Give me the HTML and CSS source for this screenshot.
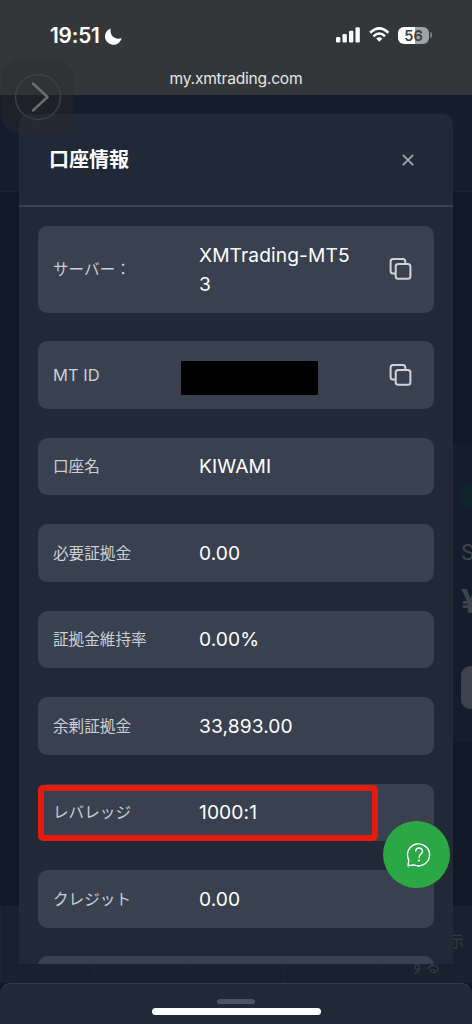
FILE: index.html
```html
<!DOCTYPE html>
<html lang="ja">
<head>
<meta charset="utf-8">
<meta name="viewport" content="width=device-width, initial-scale=1">
<title>口座情報</title>
<link rel="stylesheet" href="styles.css">
</head>
<body>
<div class="phone">
  <header class="browser-bar">
    <div class="status">
      <div class="clock">
        <span class="time">19:51</span>
        <svg class="moon" width="17" height="17" viewBox="0 0 17 17"><path d="M5.8.4C4.200 7 9.300 12.300 16.600 10.200A8.400 8.400 0 1 1 5.800.4Z" fill="#fff"/></svg>
      </div>
      <div class="indicators">
        <svg width="25" height="16" viewBox="0 0 25 16" fill="#fff"><rect x="0" y="10" width="4.300" height="5.500" rx="1.200"/><rect x="6.500" y="7" width="4.300" height="8.500" rx="1.200"/><rect x="13" y="3.800" width="4.300" height="11.700" rx="1.200"/><rect x="19.500" y=".3" width="4.300" height="15.200" rx="1.200"/></svg>
        <svg width="21" height="16" viewBox="0 0 21 16" fill="none" stroke="#fff" stroke-width="2.600"><path d="M1.200 5.700Q10.300-2.900 19.400 5.700M4.500 9.200Q10.300 3.800 16.100 9.200"/><path d="M7.200 11.600Q10.300 8.900 13.400 11.600L10.300 14.800Z" fill="#fff" stroke="none"/></svg>
        <div class="battery"><span class="cell">56</span><span class="cap"></span></div>
      </div>
    </div>
    <div class="address">my.xmtrading.com</div>
  </header>

  <main class="viewport">
    <div class="backdrop">
      <div class="site-head"></div>
      <div class="site-body">
        <div class="account-card">
          <span class="pill"></span>
          <span class="kind">S</span>
          <span class="amount">¥</span>
          <span class="button"></span>
        </div>
      </div>
      <div class="tabs"><span></span><span></span><span></span><span></span><span class="tab-text">もっと表示<br>する</span></div>
    </div>

    <section class="modal">
      <div class="modal-head">
        <h1>口座情報</h1>
        <svg width="12" height="12" viewBox="0 0 12 12" stroke="#a3adb8" stroke-width="1.700" stroke-linecap="round"><path d="M1.300 1.300l9.400 9.400M10.700 1.300l-9.400 9.400"/></svg>
      </div>
      <div class="rows">
        <div class="row row-server">
          <span class="label">サーバー：</span><span class="value server">XMTrading-MT53</span>
          <svg class="copy" width="24" height="24" viewBox="0 0 24 24"><path d="M17.300 6.500V4.600A2.500 2.500 0 0 0 14.800 2.100H5.100A2.500 2.500 0 0 0 2.600 4.600V14A2.500 2.500 0 0 0 5.100 16.500H7"/><rect x="7.700" y="7" width="14.700" height="14.700" rx="2.500"/></svg>
        </div>
        <div class="row row-id">
          <span class="label latin">MT ID</span><span class="value"><span class="masked"></span></span>
          <svg class="copy" width="24" height="24" viewBox="0 0 24 24"><path d="M17.300 6.500V4.600A2.500 2.500 0 0 0 14.800 2.100H5.100A2.500 2.500 0 0 0 2.600 4.600V14A2.500 2.500 0 0 0 5.100 16.500H7"/><rect x="7.700" y="7" width="14.700" height="14.700" rx="2.500"/></svg>
        </div>
        <div class="row"><span class="label">口座名</span><span class="value">KIWAMI</span></div>
        <div class="row"><span class="label">必要証拠金</span><span class="value">0.00</span></div>
        <div class="row"><span class="label">証拠金維持率</span><span class="value">0.00%</span></div>
        <div class="row"><span class="label">余剰証拠金</span><span class="value">33,893.00</span></div>
        <div class="row"><span class="label">レバレッジ</span><span class="value">1000:1</span><span class="highlight"></span></div>
        <div class="row"><span class="label">クレジット</span><span class="value">0.00</span></div>
        <div class="row"></div>
      </div>
    </section>
  </main>

  <footer class="sheet"><span class="grip"></span><span class="home"></span></footer>

  <div class="assist"><svg width="48" height="48" viewBox="0 0 48 48" fill="none" stroke-linecap="round" stroke-linejoin="round"><circle cx="24" cy="24" r="22.500" stroke="#3b4347" stroke-width="1.300"/><path d="M19 10.500L33.500 24 19 37.500" stroke="#696b6e" stroke-width="2.500"/></svg></div>
  <div class="chat"><svg width="26" height="26" viewBox="0 0 26 26" fill="none" stroke="#fff" stroke-width="1.400" stroke-linecap="round" stroke-linejoin="round"><path d="M2 23.800L2.800 18A11 11 0 1 1 8 22.900Z"/><path d="M9.700 9.300C9.700 5 16.500 5 16.500 9.200C16.500 12 13.100 12 13.100 15.500"/><circle cx="13.100" cy="18.600" r=".4"/></svg></div>
</div>
</body>
</html>
```
FILE: styles.css
```css
* { box-sizing: border-box; }
body { margin: 0; background: #111827; }
svg { display: block; }
.phone {
  position: relative;
  width: 472px;
  height: 1024px;
  overflow: hidden;
  display: flex;
  flex-direction: column;
  font-family: Inter, "Noto Sans CJK JP", sans-serif;
  color: #fff;
}
.browser-bar { height: 95px; flex: none; background: #343739; padding-top: 24px; }
.status { height: 24px; display: flex; justify-content: space-between; padding: 0 40px 0 50px; }
.clock { display: flex; align-items: center; gap: 5px; }
.time { font-size: 20.8px; font-weight: 600; letter-spacing: -.2px; line-height: 24px; }
.indicators { display: flex; align-items: center; padding-bottom: 2px; }
.indicators svg + svg { margin-left: 8px; }
.battery { display: flex; align-items: center; gap: 1px; margin-left: 8px; }
.cell {
  width: 31px;
  height: 17px;
  border-radius: 6px;
  background: linear-gradient(90deg, #fff 56%, #a0a2a3 56%);
  color: #3b3e40;
  font-size: 14.5px;
  font-weight: 600;
  line-height: 17px;
  text-align: center;
}
.cap { width: 2px; height: 6px; border-radius: 0 2px 2px 0; background: #77797b; }
.address { margin-top: 21px; text-align: center; font-size: 15.6px; letter-spacing: -.22px; line-height: 20px; color: #e5e6e6; }

.viewport { position: relative; height: 888px; flex: none; padding: 19px 19px 19px; }
.backdrop { position: absolute; inset: 0; display: flex; flex-direction: column; background: #111827; }
.site-head { height: 97px; background: #151c2b; border-bottom: 1px solid #1b2230; }
.site-body { height: 714px; padding-top: 252px; display: flex; justify-content: flex-end; }
.account-card {
  width: 19px;
  height: 298px;
  padding: 40px 0 0 8px;
  overflow: hidden;
  display: flex;
  flex-direction: column;
  background: #151c2c;
  color: #3e444d;
}
.pill { flex: none; width: 30px; height: 24px; border-radius: 9px; background: #0e242b; }
.kind { font-size: 21px; line-height: 24px; margin-top: 33px; }
.amount { font-size: 33px; font-weight: 700; line-height: 34px; margin-top: 19px; }
.button { flex: none; width: 40px; height: 43px; margin-top: 48px; border-radius: 9px; background: #3e444f; }
.tabs { height: 77px; display: grid; grid-template-columns: repeat(5, 94.4px); background: #19202e; }
.tabs span { border-left: 1px solid #1d2432; }
.tab-text { padding-top: 23px; text-align: center; white-space: nowrap; font-size: 15.6px; line-height: 25px; color: #333a45; }

.modal {
  position: relative;
  width: 434px;
  height: 850px;
  overflow: hidden;
  border-radius: 10px 10px 0 0;
  background: #212936;
}
.modal-head {
  height: 93px;
  padding: 0 39px 0 30px;
  display: flex;
  align-items: center;
  justify-content: space-between;
  border-bottom: 2px solid #3b4452;
}
.modal-head h1 { margin: 0; font-size: 20px; line-height: 28px; font-weight: 700; }
.rows { display: flex; flex-direction: column; gap: 28.9px; padding: 19px 19.500px 0 19px; }
.row {
  position: relative;
  flex: none;
  height: 57.600px;
  padding: 0 22px 0 15px;
  display: grid;
  grid-template-columns: 146px 160px 1fr;
  align-items: center;
  border-radius: 9.600px;
  background: #394150;
}
.row-server { height: 86.600px; }
.row-id { height: 67.200px; }
.label { padding-top: 2px; font-size: 15.600px; line-height: 24px; color: #cbcfd5; white-space: nowrap; }
.latin { padding-top: 0; font-size: 16.500px; }
.value { padding-top: 1px; font-size: 19.200px; line-height: 28.800px; font-weight: 400; letter-spacing: .1px; }
.server { word-break: break-all; }
.masked { display: block; width: 137px; height: 34px; margin: 5px 0 0 -18px; border-radius: 1px; background: #000; }
.copy { justify-self: end; fill: none; stroke: #cfd3d9; stroke-width: 2; stroke-linecap: round; }
.highlight {
  position: absolute;
  left: 0;
  top: 1.500px;
  width: 339.500px;
  height: 56px;
  border: 6px solid #e71a0f;
  border-radius: 5px;
}

.sheet {
  height: 41px;
  flex: none;
  display: flex;
  flex-direction: column;
  align-items: center;
  gap: 4px;
  padding-top: 15px;
  border-top: 1px solid #343b47;
  border-radius: 11px 11px 0 0;
  background: #212936;
}
.grip { width: 38px; height: 5px; border-radius: 3px; background: #4b5462; }
.home { width: 169px; height: 7px; border-radius: 4px; background: #fff; }

.assist {
  position: absolute;
  left: 1px;
  top: 60px;
  width: 73px;
  height: 73px;
  display: grid;
  place-items: center;
  border-radius: 19px;
  background: rgba(44, 43, 42, .4);
}
.chat {
  position: absolute;
  left: 383px;
  top: 821px;
  width: 67px;
  height: 67px;
  padding-left: 5px;
  display: grid;
  place-items: center;
  border-radius: 50%;
  background: #2ba745;
}
```
